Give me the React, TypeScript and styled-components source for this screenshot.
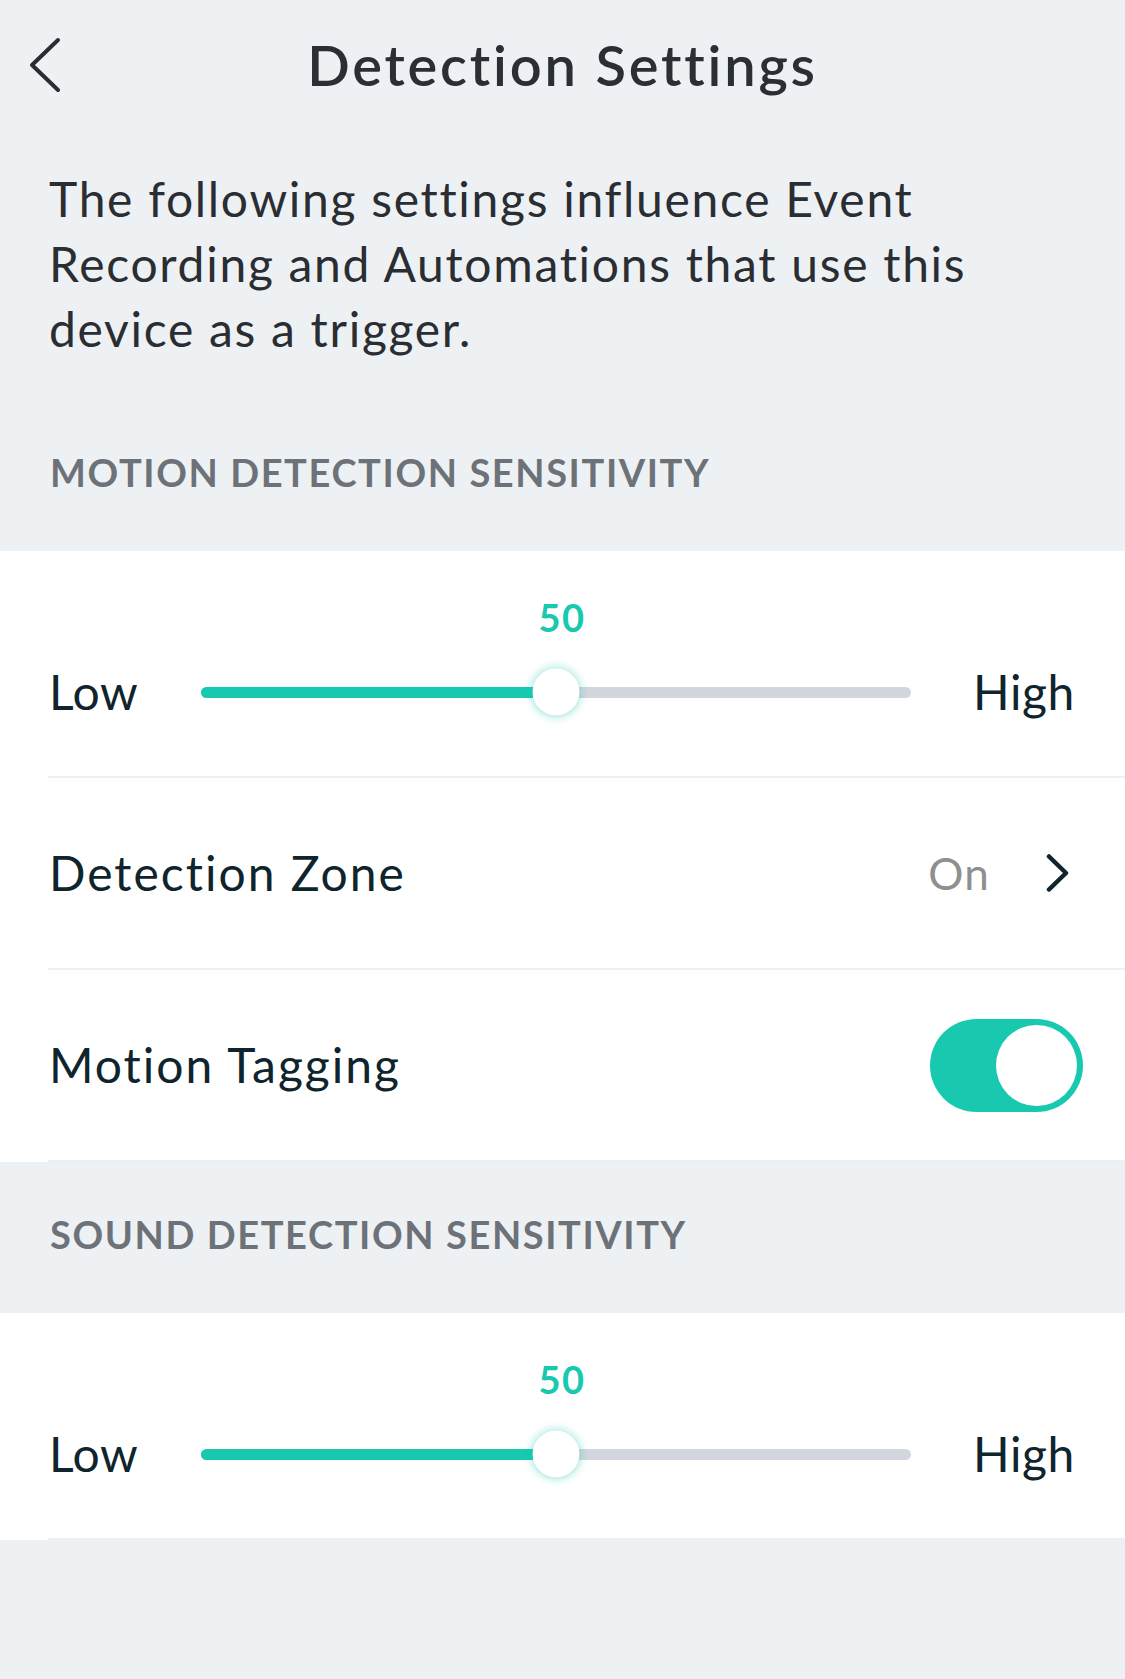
import React, { useState } from "react";
import styled, { createGlobalStyle } from "styled-components";

const GlobalStyle = createGlobalStyle`
  html, body {
    margin: 0;
    padding: 0;
    background: #eef1f4;
  }
  body {
    font-family: Lato, "Liberation Sans", sans-serif;
    -webkit-font-smoothing: antialiased;
  }
`;

const TEAL = "#18c9b0";
const INK = "#0f242c";

const Page = styled.div`
  width: 1125px;
  min-height: 1679px;
  background: #eef1f4;
  display: flex;
  flex-direction: column;
`;

const NavBar = styled.header`
  height: 130px;
  display: grid;
  grid-template-columns: 140px 1fr 140px;
  align-items: center;
`;

const BackButton = styled.button`
  border: 0;
  background: none;
  padding: 0 0 0 28px;
  height: 60px;
  display: flex;
  align-items: center;
  cursor: pointer;
  color: #2a2e33;
`;

const Title = styled.h1`
  margin: 0;
  text-align: center;
  font-size: 56px;
  line-height: 64px;
  font-weight: 600;
  color: #2b2f34;
  letter-spacing: 2.8px;
`;

const Intro = styled.p`
  margin: 0;
  padding: 36px 80px 39px 49px;
  font-size: 48px;
  line-height: 65px;
  font-weight: 400;
  letter-spacing: 1.7px;
  color: #2a2d31;
`;

const SectionHeader = styled.h2`
  margin: 0;
  padding: 53px 50px 60px;
  font-size: 38px;
  line-height: 38px;
  font-weight: 700;
  letter-spacing: 1.6px;
  color: #6d7279;
  text-transform: uppercase;
`;

const Card = styled.section`
  background: #ffffff;
  display: flex;
  flex-direction: column;
`;

const Row = styled.div<{ $height?: number; $padRight?: number }>`
  position: relative;
  display: flex;
  align-items: center;
  min-height: ${(p) => p.$height ?? 190}px;
  padding: 0 ${(p) => p.$padRight ?? 55}px 0 49px;
  border-bottom: 2px solid transparent;

  &::after {
    content: "";
    position: absolute;
    left: 48px;
    right: 0;
    bottom: -2px;
    height: 2px;
    background: #eceef1;
  }
`;

const RowLabel = styled.span`
  flex: 1;
  font-size: 48px;
  line-height: 60px;
  letter-spacing: 2px;
  color: ${INK};
`;

const RowValue = styled.span`
  font-size: 44px;
  line-height: 60px;
  letter-spacing: 1.2px;
  color: #8d8f90;
  margin-right: 56px;
`;

const SliderBlock = styled.div`
  position: relative;
  padding: 48px 0 52px;
  display: grid;
  grid-template-columns: 201px 1fr 214px;
  grid-template-rows: 36px 64px;
  row-gap: 25px;
  border-bottom: 2px solid transparent;

  &::after {
    content: "";
    position: absolute;
    left: 48px;
    right: 0;
    bottom: -2px;
    height: 2px;
    background: #eceef1;
  }
`;

const ValueLane = styled.div`
  grid-column: 2;
  grid-row: 1;
  position: relative;
`;

const ValueBubble = styled.span`
  position: absolute;
  top: -1px;
  transform: translateX(-50%);
  font-size: 38px;
  line-height: 38px;
  font-weight: 700;
  letter-spacing: 1.5px;
  color: ${TEAL};
`;

const EndLabel = styled.span<{ $align: "left" | "right" }>`
  grid-row: 2;
  align-self: center;
  font-size: 48px;
  line-height: 64px;
  letter-spacing: 0.6px;
  color: ${INK};
  text-align: ${(p) => p.$align};
  padding: ${(p) => (p.$align === "left" ? "0 0 0 49px" : "0 50px 0 0")};
`;

const Track = styled.div`
  grid-row: 2;
  grid-column: 2;
  align-self: center;
  position: relative;
  height: 11px;
  border-radius: 6px;
  background: #d3d6df;
`;

const Fill = styled.div`
  position: absolute;
  left: 0;
  top: 0;
  bottom: 0;
  border-radius: 6px;
  background: ${TEAL};
`;

const Thumb = styled.div`
  position: absolute;
  top: 50%;
  width: 47px;
  height: 47px;
  border-radius: 50%;
  background: #ffffff;
  transform: translate(-50%, -50%);
  box-shadow: 0 0 7px 3px rgba(24, 201, 176, 0.28),
    0 1px 3px rgba(0, 0, 0, 0.06);
`;

const ToggleTrack = styled.button<{ $on: boolean }>`
  position: relative;
  width: 153px;
  height: 93px;
  border: 0;
  padding: 0;
  border-radius: 47px;
  background: ${(p) => (p.$on ? TEAL : "#d3d6df")};
  cursor: pointer;
  flex-shrink: 0;
`;

const ToggleKnob = styled.span<{ $on: boolean }>`
  position: absolute;
  top: 6px;
  left: ${(p) => (p.$on ? "66px" : "6px")};
  width: 81px;
  height: 81px;
  border-radius: 50%;
  background: #ffffff;
  transition: left 0.15s ease;
`;

const BackChevron = () => (
  <svg width="34" height="58" viewBox="0 0 34 58" fill="none">
    <path
      d="M30 4 L4 29 L30 54"
      stroke="currentColor"
      strokeWidth="4"
      strokeLinecap="round"
      strokeLinejoin="round"
    />
  </svg>
);

const ForwardChevron = () => (
  <svg width="24" height="38" viewBox="0 0 24 38" fill="none">
    <path
      d="M3 2.5 L20 19 L3 35.5"
      stroke={INK}
      strokeWidth="4.5"
      strokeLinecap="round"
      strokeLinejoin="round"
    />
  </svg>
);

function Slider({ value }: { value: number }) {
  const pct = `${value}%`;
  return (
    <SliderBlock>
      <ValueLane>
        <ValueBubble style={{ left: `calc(${pct} + 6px)` }}>{value}</ValueBubble>
      </ValueLane>
      <EndLabel $align="left">Low</EndLabel>
      <Track>
        <Fill style={{ width: pct }} />
        <Thumb style={{ left: pct }} />
      </Track>
      <EndLabel $align="right">High</EndLabel>
    </SliderBlock>
  );
}

export default function App() {
  const [tagging, setTagging] = useState(true);

  return (
    <Page>
      <GlobalStyle />
      <NavBar>
        <BackButton aria-label="Back">
          <BackChevron />
        </BackButton>
        <Title>Detection Settings</Title>
        <span />
      </NavBar>

      <Intro>
        The following settings influence Event Recording and Automations that
        use this device as a trigger.
      </Intro>

      <SectionHeader>Motion Detection Sensitivity</SectionHeader>
      <Card>
        <Slider value={50} />
        <Row>
          <RowLabel>Detection Zone</RowLabel>
          <RowValue>On</RowValue>
          <ForwardChevron />
        </Row>
        <Row $padRight={42}>
          <RowLabel>Motion Tagging</RowLabel>
          <ToggleTrack
            $on={tagging}
            aria-pressed={tagging}
            onClick={() => setTagging((t) => !t)}
          >
            <ToggleKnob $on={tagging} />
          </ToggleTrack>
        </Row>
      </Card>

      <SectionHeader>Sound Detection Sensitivity</SectionHeader>
      <Card>
        <Slider value={50} />
      </Card>
    </Page>
  );
}
